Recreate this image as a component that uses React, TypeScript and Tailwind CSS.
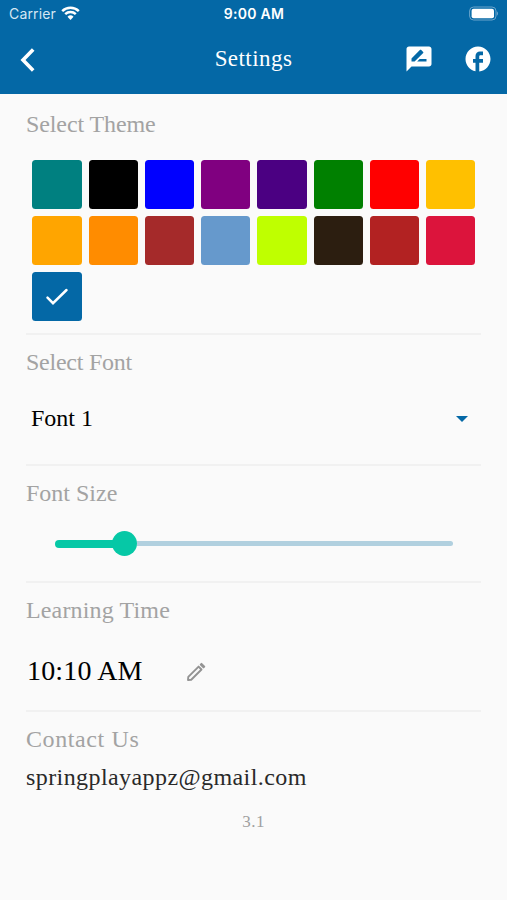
import type { ReactNode } from 'react';
import { MdFacebook, MdRateReview } from 'react-icons/md';

const themeColors = [
  '#008080',
  '#000000',
  '#0000ff',
  '#800080',
  '#4b0082',
  '#008000',
  '#ff0000',
  '#ffc000',
  '#ffa500',
  '#ff8c00',
  '#a52a2a',
  '#6699cc',
  '#bfff00',
  '#2c1e10',
  '#b22222',
  '#dc143c',
  '#0468a6',
];

const selectedTheme = '#0468a6';

function StatusBar() {
  return (
    <div className="grid h-[27px] grid-cols-3 items-center px-[9px] font-['Inter','Liberation_Sans',sans-serif] text-[14px] leading-none">
      <div className="flex items-center gap-[5px] text-[#d5e7f3]">
        <span className="tracking-[0.15px]">Carrier</span>
        <svg
          className="-mt-px h-[14px] w-[19px]"
          fill="none"
          viewBox="0 0 19 14"
        >
          <path
            d="M1.2 5.1a12 12 0 0 1 16.6 0M4.2 8.1a7.7 7.7 0 0 1 10.6 0"
            stroke="white"
            strokeWidth="2.5"
          />
          <path d="M9.5 14 6.5 10.7a4.4 4.4 0 0 1 6 0Z" fill="white" />
        </svg>
      </div>
      <span className="pl-px text-center font-semibold tracking-[0.3px]">
        9:00 AM
      </span>
      <svg
        className="h-[15px] w-[30px] justify-self-end"
        fill="none"
        viewBox="0 0 30 15"
      >
        <rect
          height="13"
          rx="4"
          stroke="#6aa4cb"
          width="26.4"
          x="1.6"
          y="1"
        />
        <rect fill="white" height="9.6" rx="2" width="22.4" x="3.6" y="2.7" />
        <path d="M28.8 5.3c1.6.9 1.6 3.5 0 4.4Z" fill="#6aa4cb" />
      </svg>
    </div>
  );
}

function Header() {
  return (
    <header className="h-[94px] shrink-0 bg-[#0468a6] text-white">
      <StatusBar />
      <div className="grid h-[65px] grid-cols-3 items-center pr-[14px] pl-[20px]">
        <button aria-label="Back" className="w-fit" type="button">
          <svg className="h-6 w-[15px]" fill="none" viewBox="0 0 15 24">
            <path
              d="M13.2 1.5 3 12l10.2 10.5"
              stroke="currentColor"
              strokeWidth="3.6"
            />
          </svg>
        </button>
        <h1 className="pr-[6px] text-center text-[23px] tracking-[0.45px]">
          Settings
        </h1>
        <div className="flex items-center justify-end gap-[29px]">
          <MdRateReview className="mb-px h-[30px] w-[30px]" />
          <MdFacebook className="mb-px h-[30px] w-[30px]" />
        </div>
      </div>
    </header>
  );
}

type SectionProps = {
  title: string;
  className: string;
  titleClassName?: string;
  children: ReactNode;
};

function Section({
  title,
  className,
  titleClassName = '',
  children,
}: SectionProps) {
  return (
    <section className={`mr-[26px] ml-[26px] ${className}`}>
      <h2 className={`text-[24px] text-[#a3a3a3] leading-7 ${titleClassName}`}>
        {title}
      </h2>
      {children}
    </section>
  );
}

export default function App() {
  return (
    <div className="flex h-[900px] w-[507px] flex-col bg-[#fafafa] font-['Liberation_Serif',serif] text-black">
      <Header />
      <main>
        <Section
          className="h-[241px] border-[#f1f1f1] border-b-2 pt-[16px]"
          title="Select Theme"
          titleClassName="tracking-[-0.1px]"
        >
          <div className="mt-[21.5px] ml-[6.4px] grid w-[443px] grid-cols-8 gap-[7px]">
            {themeColors.map((color) => (
              <button
                aria-label={color}
                className="flex h-[49.2px] items-center justify-center rounded-[3.5px]"
                key={color}
                style={{ backgroundColor: color }}
                type="button"
              >
                {color === selectedTheme && (
                  <svg className="mt-px h-6 w-6" fill="none" viewBox="0 0 24 24">
                    <path
                      d="M2.5 12.7 8 18.2 21.5 5"
                      stroke="white"
                      strokeLinecap="round"
                      strokeWidth="2.5"
                    />
                  </svg>
                )}
              </button>
            ))}
          </div>
        </Section>

        <Section
          className="h-[131px] border-[#f1f1f1] border-b-2 pt-[13px]"
          title="Select Font"
          titleClassName="tracking-[-0.25px]"
        >
          <div className="mt-[28px] flex items-center justify-between pr-[13px] pl-[5px]">
            <span className="text-[24px] leading-7">Font 1</span>
            <svg className="mt-[2px] h-[6px] w-[12px]" viewBox="0 0 12 6">
              <path d="M0 0h12L6 6Z" fill="#0468a6" />
            </svg>
          </div>
        </Section>

        <Section
          className="h-[117px] border-[#f1f1f1] border-b-2 pt-[13px]"
          title="Font Size"
        >
          <div className="mt-[24px] mr-[28px] ml-[29px] flex h-[25px] items-center">
            <div className="h-2 w-[62px] rounded-l-full bg-[#06c8a6]" />
            <div className="-ml-[5.5px] h-[25px] w-[25px] rounded-full bg-[#06c8a6]" />
            <div className="h-[5px] flex-1 rounded-r-full bg-[#b1d0df]" />
          </div>
        </Section>

        <Section
          className="h-[129px] border-[#f1f1f1] border-b-2 pt-[13px]"
          title="Learning Time"
          titleClassName="tracking-[0.15px]"
        >
          <div className="mt-[31px] flex items-center gap-[43px] pl-px">
            <span className="text-[28px] leading-8 tracking-[0.15px]">
              10:10 AM
            </span>
            <svg
              className="mt-[2px] h-5 w-5"
              fill="none"
              stroke="#939393"
              strokeLinejoin="round"
              strokeWidth="1.9"
              viewBox="0 0 20 20"
            >
              <path d="M2 18 2.3 14.9 12.6 4.6l2.9 2.9L5.2 17.7Z" />
              <path d="m14.7 2.6.8-.8 2.8 2.8-.8.8Z" fill="#939393" />
            </svg>
          </div>
        </Section>

        <Section
          className="pt-[13px]"
          title="Contact Us"
          titleClassName="tracking-[0.6px]"
        >
          <p className="mt-[10px] text-[#292929] text-[24px] leading-7 tracking-[0.42px]">
            springplayappz@gmail.com
          </p>
          <p className="mt-[21px] text-center text-[#a0a0a0] text-[17px] leading-5 tracking-[0.5px]">
            3.1
          </p>
        </Section>
      </main>
    </div>
  );
}
